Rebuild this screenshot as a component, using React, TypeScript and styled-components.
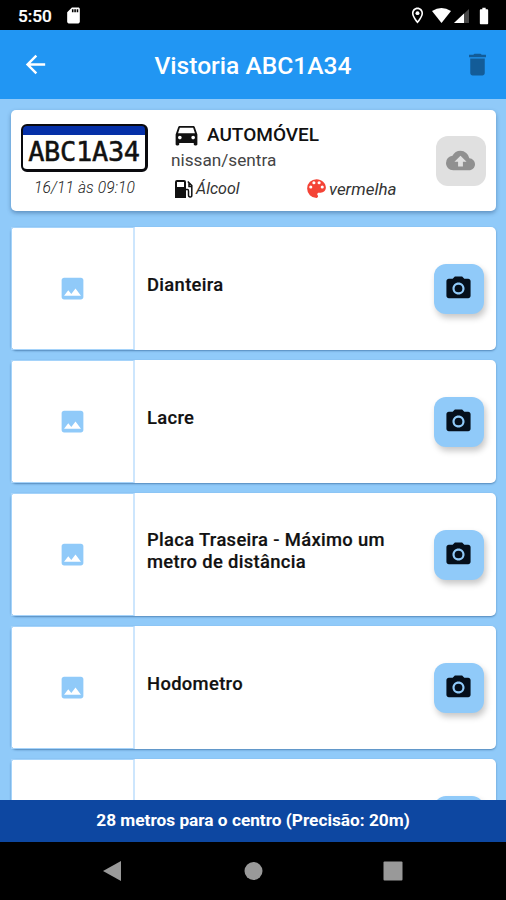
import React from "react";
import styled, { createGlobalStyle, css } from "styled-components";
import {
  MdArrowBack, MdDelete, MdDirectionsCar, MdBackup,
  MdImage, MdCameraAlt, MdSdCard, MdOutlineLocationOn, MdBatteryFull,
} from "react-icons/md";

const Global = createGlobalStyle`
  * { box-sizing: border-box; }
  body { margin: 0; font-family: Roboto, "Liberation Sans", sans-serif; overflow: hidden; }
  svg { display: block; flex: none; }
`;

const Screen = styled.div`
  width: 506px;
  height: 900px;
  display: flex;
  flex-direction: column;
  background: #90caf9;
  overflow: hidden;
`;

const StatusBar = styled.header`
  height: 30px;
  flex: none;
  display: flex;
  align-items: center;
  background: #000;
  color: #fff;
  padding: 1px 12px 0 18px;
`;

const Clock = styled.span`
  width: 46px;
  font-size: 17.2px;
  font-weight: 500;
  line-height: 20px;
  -webkit-text-stroke: 0.2px #fff;
`;

const StatusIcons = styled.div`
  margin-left: auto;
  display: flex;
  align-items: center;
`;

const AppBar = styled.div`
  height: 69px;
  flex: none;
  display: grid;
  grid-template-columns: 70px 1fr 58px;
  align-items: center;
  background: #2196f3;
  color: #fff;
`;

const BarAction = styled.button<{ $dim?: boolean }>`
  border: 0;
  padding: 0;
  background: none;
  display: flex;
  justify-content: center;
  color: ${(p) => (p.$dim ? "#135c98" : "#fff")};
`;

const Title = styled.h1`
  margin: 0;
  padding: 2px 12px 0 0;
  text-align: center;
  font-size: 24.6px;
  font-weight: 500;
  line-height: 30px;
`;

const Content = styled.main`
  flex: 1;
  min-height: 0;
  overflow: hidden;
  padding: 11px 10px 0 11px;
  display: flex;
  flex-direction: column;
`;

const cardBase = css`
  flex: none;
  display: flex;
  background: #fff;
  border-radius: 5px;
`;

const SummaryCard = styled.section`
  ${cardBase}
  height: 101px;
  margin-bottom: 16px;
  padding: 0 10px;
  box-shadow: 0 2px 4px rgba(30, 70, 120, 0.45);
`;

const PlateColumn = styled.div`
  width: 127px;
  padding-top: 14px;
  display: flex;
  flex-direction: column;
  align-items: center;
`;

const Plate = styled.div`
  width: 127px;
  height: 48px;
  border: 2px solid #0a0a0e;
  border-bottom-width: 3px;
  border-right-width: 3px;
  border-radius: 6px;
  overflow: hidden;
  background: linear-gradient(#0530a8 0 9px, #fff 9px);
  padding-top: 9px;
  text-align: center;
  white-space: nowrap;
  font: 27px/34px "DejaVu Sans Mono", monospace;
  letter-spacing: -0.3px;
  color: #111;
  -webkit-text-stroke: 0.5px #111;
`;

const Stamp = styled.span`
  margin-top: 6px;
  font-size: 15.6px;
  font-style: italic;
  font-weight: 300;
  line-height: 20px;
  letter-spacing: 0.1px;
  color: #222;
  white-space: nowrap;
`;

const Details = styled.div`
  flex: 1;
  padding: 12px 0 0 23px;
`;

const Kind = styled.div`
  display: flex;
  align-items: center;
  gap: 6px;
  height: 25px;
  padding-left: 1px;
  font-size: 19px;
  font-weight: 500;
  color: #111;
`;

const Model = styled.div`
  height: 26px;
  font-size: 17.2px;
  line-height: 26px;
  color: #444;
`;

const Traits = styled.div`
  display: grid;
  grid-template-columns: 133px 1fr;
  height: 31px;
`;

const Trait = styled.span<{ $iconColor: string; $narrow?: boolean }>`
  display: flex;
  align-items: center;
  font-size: ${(p) => (p.$narrow ? "16px" : "17px")};
  font-style: italic;
  color: #333;
  svg { color: ${(p) => p.$iconColor}; }
`;

const ActionButton = styled.button<{ $disabled?: boolean }>`
  width: 50px;
  height: 50px;
  flex: none;
  align-self: center;
  border: 0;
  padding: 0 1px 0 0;
  border-radius: 12px;
  display: flex;
  align-items: center;
  justify-content: center;
  background: ${(p) => (p.$disabled ? "#e0e0e0" : "#90caf9")};
  color: ${(p) => (p.$disabled ? "#909090" : "#050f1b")};
  box-shadow: ${(p) => (p.$disabled ? "none" : "2px 4px 6px rgba(0, 0, 0, 0.22)")};
`;

const PhotoRow = styled.article`
  ${cardBase}
  height: 123px;
  margin-bottom: 10px;
  padding-right: 12px;
  box-shadow: 0 1px 2px rgba(40, 90, 140, 0.6);
`;

const Thumb = styled.div`
  width: 124px;
  flex: none;
  border: 1px solid #a5d3fa;
  border-right: 2px solid #cde6fd;
  display: flex;
  align-items: center;
  justify-content: center;
  color: #90caf9;
`;

const Label = styled.h2`
  flex: 1;
  align-self: center;
  margin: 0;
  padding: 0 36px 8px 12px;
  font-size: 18.4px;
  font-weight: 500;
  line-height: 22px;
  letter-spacing: 0.33px;
  color: #111;
  -webkit-text-stroke: 0.2px #111;
`;

const DistanceBar = styled.footer`
  height: 42px;
  flex: none;
  background: #0d47a1;
  color: #fff;
  font-size: 17.25px;
  font-weight: 700;
  line-height: 40px;
  text-align: center;
`;

const NavBar = styled.nav`
  height: 58px;
  flex: none;
  background: #000;
  display: flex;
  align-items: center;
  justify-content: space-between;
  padding: 0 103px 0 102px;
`;

const FuelIcon = () => (
  <svg width="25" height="24" viewBox="0 0 25 24">
    <path
      fill="currentColor"
      fillRule="evenodd"
      d="M6 3H13Q15 3 15 5V21H4V5Q4 3 6 3ZM6 5V10H13V5Z"
    />
    <path
      fill="none"
      stroke="currentColor"
      strokeWidth="1.5"
      d="M15 12.500H16.500Q17.500 12.500 17.500 14V18Q17.500 20 19.200 20T20.800 18V8.500L16.800 4.500M18 6V9.500H20.500"
    />
  </svg>
);

const PaletteIcon = () => (
  <svg width="25" height="25" viewBox="0 0 24 24" fill="currentColor">
    <path d="M12 3a9 9 0 0 0 0 18c.83 0 1.500-.67 1.500-1.500 0-.39-.15-.74-.39-1.010-.23-.26-.38-.61-.38-.99 0-.83.67-1.500 1.500-1.500H16c2.760 0 5-2.240 5-5 0-4.420-4.030-8-9-8zm-5.500 9a1.500 1.500 0 1 1 0-3 1.500 1.500 0 0 1 0 3zm3-4a1.500 1.500 0 1 1 0-3 1.500 1.500 0 0 1 0 3zm5 0a1.500 1.500 0 1 1 0-3 1.500 1.500 0 0 1 0 3zm3 4a1.500 1.500 0 1 1 0-3 1.500 1.500 0 0 1 0 3z" />
  </svg>
);

const photos = [
  "Dianteira",
  "Lacre",
  "Placa Traseira - Máximo um metro de distância",
  "Hodometro",
  "",
];

export default function App() {
  return (
    <Screen>
      <Global />
      <StatusBar>
        <Clock>5:50</Clock>
        <MdSdCard size={19} />
        <StatusIcons>
          <MdOutlineLocationOn size={19} />
          <svg width="47" height="18" viewBox="0 0 47 18" fill="#fff">
            <path d="M5 4Q14.500-2 24 4L14.500 16Z" />
            <path d="M42 2v14H27Z" fill="#484848" />
            <path d="M37 6.500V16H27Z" />
          </svg>
          <MdBatteryFull size={20} />
        </StatusIcons>
      </StatusBar>

      <AppBar>
        <BarAction aria-label="Voltar"><MdArrowBack size={29} /></BarAction>
        <Title>Vistoria ABC1A34</Title>
        <BarAction $dim aria-label="Excluir"><MdDelete size={29} /></BarAction>
      </AppBar>

      <Content>
        <SummaryCard>
          <PlateColumn>
            <Plate>ABC1A34</Plate>
            <Stamp>16/11 às 09:10</Stamp>
          </PlateColumn>
          <Details>
            <Kind><MdDirectionsCar size={29} />AUTOMÓVEL</Kind>
            <Model>nissan/sentra</Model>
            <Traits>
              <Trait $iconColor="#111" $narrow><FuelIcon />Álcool</Trait>
              <Trait $iconColor="#f44336"><PaletteIcon />vermelha</Trait>
            </Traits>
          </Details>
          <ActionButton $disabled aria-label="Enviar"><MdBackup size={29} /></ActionButton>
        </SummaryCard>

        {photos.map((label, i) => (
          <PhotoRow key={i}>
            <Thumb><MdImage size={29} /></Thumb>
            <Label>{label}</Label>
            <ActionButton aria-label="Fotografar"><MdCameraAlt size={29} /></ActionButton>
          </PhotoRow>
        ))}
      </Content>

      <DistanceBar>28 metros para o centro (Precisão: 20m)</DistanceBar>
      <NavBar>
        <svg width="20" height="22" viewBox="0 0 20 22" fill="#999"><path d="M19 1v20L1 11Z" /></svg>
        <svg width="20" height="20" viewBox="0 0 20 20" fill="#999"><circle cx="10.500" cy="10" r="9" /></svg>
        <svg width="20" height="20" viewBox="0 0 20 20" fill="#999"><rect x="0.500" y="0.500" width="19" height="19" rx="1" /></svg>
      </NavBar>
    </Screen>
  );
}
